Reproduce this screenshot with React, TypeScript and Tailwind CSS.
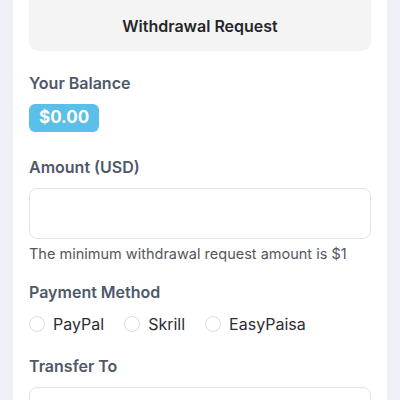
const font = { fontFamily: "Inter, 'Noto Sans', sans-serif" };

function Radio({ label }: { label: string }) {
  return (
    <label className="flex items-center gap-2">
      <span className="block h-4 w-4 rounded-full border border-[#dcdde0] bg-white" />
      <span className="text-[16px] text-[#2d2d33]">{label}</span>
    </label>
  );
}

export default function App() {
  return (
    <div className="h-[400px] overflow-hidden bg-[#eef0f5] px-[13px]" style={font}>
      <div className="h-full bg-white px-4">
        <div className="flex h-[51px] items-center justify-center rounded-b-[10px] bg-[#f4f4f5]">
          <span className="text-[16px] font-semibold text-[#26262b]">Withdrawal Request</span>
        </div>

        <div className="mt-[20px] text-[16px] font-semibold text-[#4f586b]">Your Balance</div>
        <div className="mt-[9px] inline-flex h-7 items-center rounded-md bg-[#5bc0e9] px-[10px] text-[17px] font-bold text-white">
          $0.00
        </div>

        <div className="mt-[23px] text-[16px] font-semibold text-[#4f586b]">Amount (USD)</div>
        <input className="mt-[9px] block h-[51px] w-full rounded-lg border border-[#e2e3e6] bg-white px-3 outline-none" />
        <p className="mt-[5px] text-[14.5px] leading-5 text-[#55565c]">
          The minimum withdrawal request amount is $1
        </p>

        <div className="mt-[16px] text-[16px] font-semibold text-[#4f586b]">Payment Method</div>
        <div className="mt-[8px] flex items-center gap-5">
          <Radio label="PayPal" />
          <Radio label="Skrill" />
          <Radio label="EasyPaisa" />
        </div>

        <div className="mt-[18px] text-[16px] font-semibold text-[#4f586b]">Transfer To</div>
        <input className="mt-[9px] block h-[51px] w-full rounded-lg border border-[#e2e3e6] bg-white px-3 outline-none" />
      </div>
    </div>
  );
}
